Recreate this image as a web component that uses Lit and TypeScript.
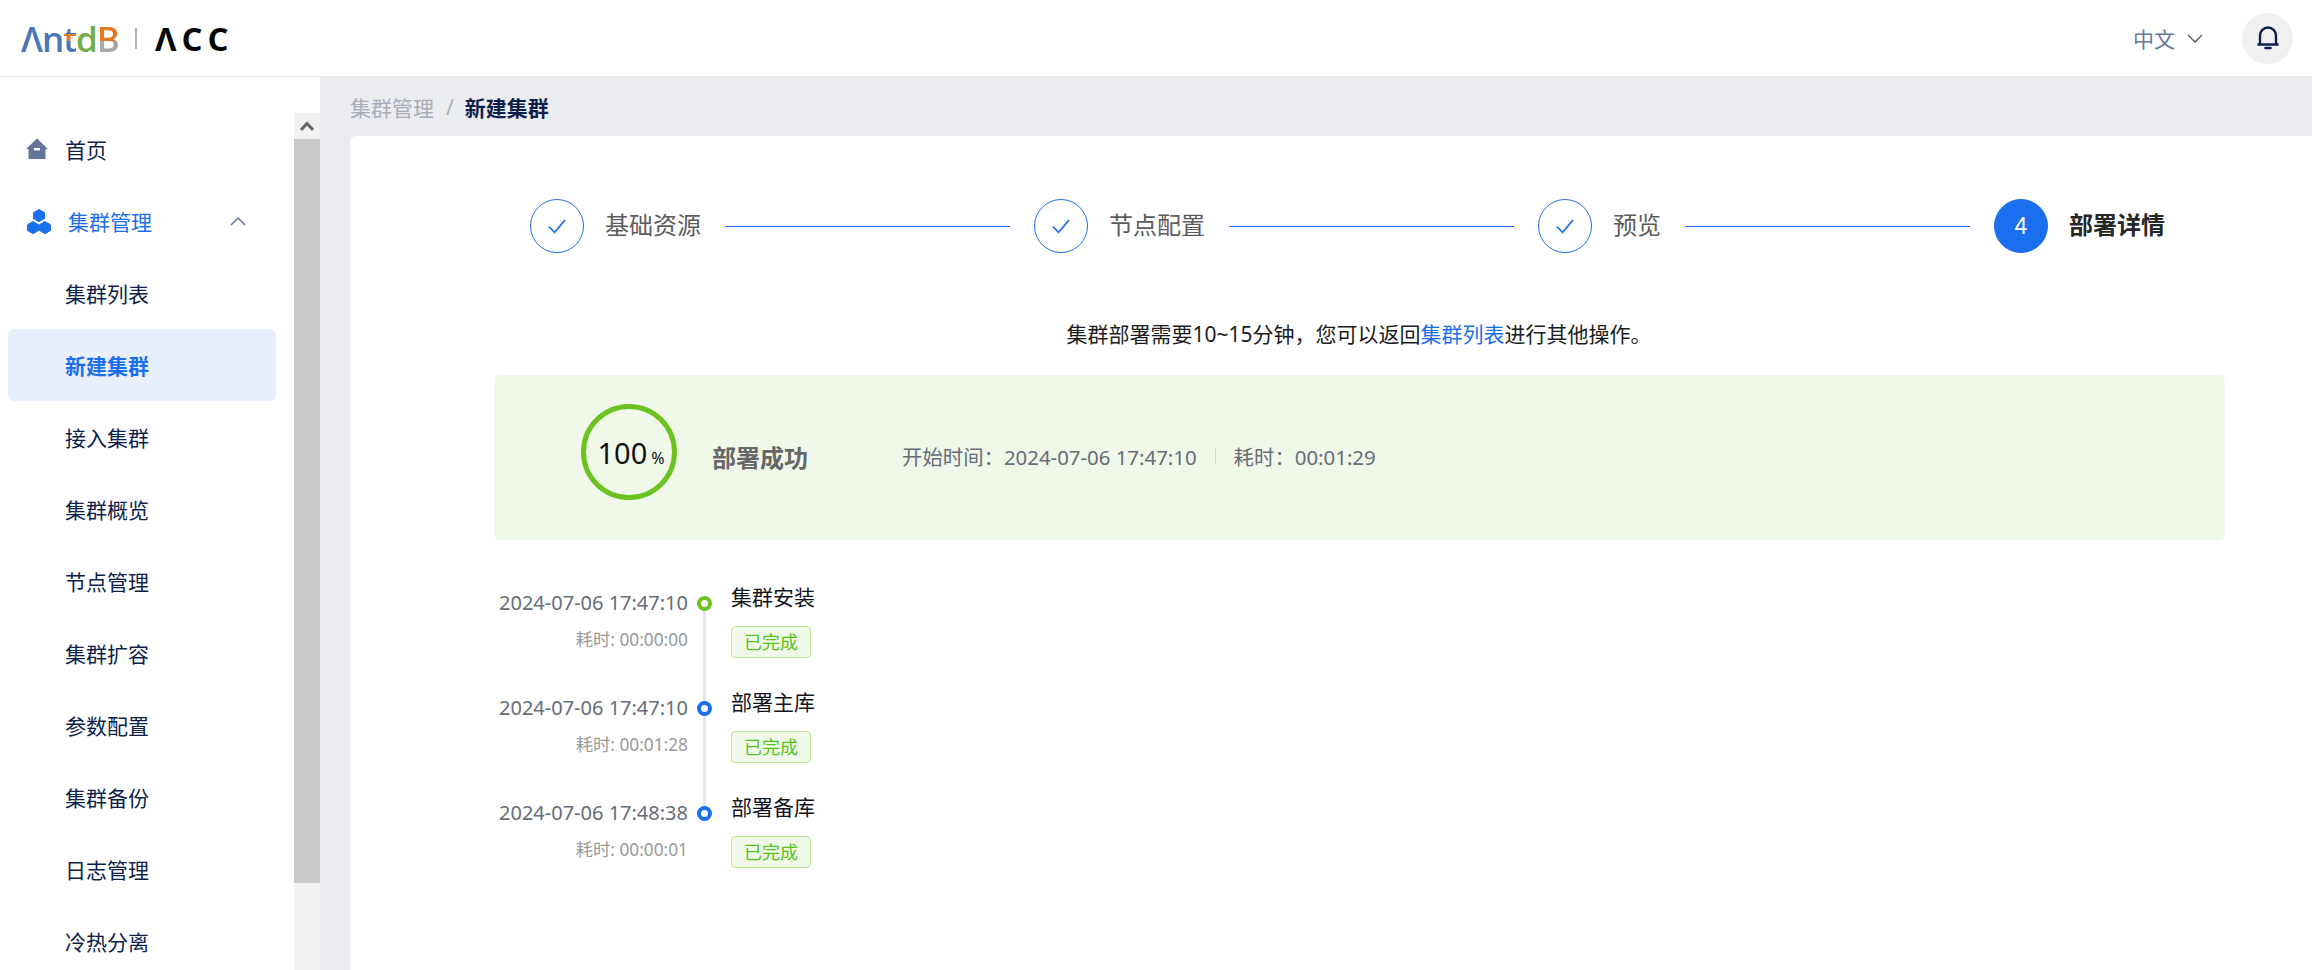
import { LitElement, html, css, svg } from "lit";
import { customElement } from "lit/decorators.js";

const menu = ["集群列表", "新建集群", "接入集群", "集群概览", "节点管理", "集群扩容", "参数配置", "集群备份", "日志管理", "冷热分离"];
const steps = ["基础资源", "节点配置", "预览", "部署详情"];
const logs = [
  { time: "2024-07-06 17:47:10", cost: "00:00:00", title: "集群安装", first: true },
  { time: "2024-07-06 17:47:10", cost: "00:01:28", title: "部署主库", first: false },
  { time: "2024-07-06 17:48:38", cost: "00:00:01", title: "部署备库", first: false },
];

const homeIcon = svg`<svg width="22" height="22" viewBox="0 0 22 22"><path d="M11 .5 22 11H19.500V21H2.500V11H0Z" fill="#64759a"/><rect x="8" y="10" width="6" height="2.400" fill="#fff"/></svg>`;
const clusterIcon = svg`<svg width="26" height="26" viewBox="0 0 26 26" fill="#1a6fee" stroke="#1a6fee" stroke-linejoin="round"><path d="M13 1.500l5.500 3.200v5.800l-5.500 3.200-5.500-3.200V4.700z"/><path d="M7 13.500l5.500 3.200v5.800L7 25.700l-5.500-3.200v-5.800z"/><path d="M19 13.500l5.500 3.200v5.800L19 25.700l-5.500-3.200v-5.800z"/></svg>`;
const bellIcon = svg`<svg width="24" height="26" viewBox="0 0 24 26" fill="none" stroke="#0d1f4c" stroke-width="2.400"><path d="M1.500 19.500h21M4 19.500V10.500a8 8 0 0 1 16 0v9"/><path d="M9.500 23h5" stroke-width="2.600" stroke-linecap="round"/></svg>`;

@customElement("app-root")
export class AppRoot extends LitElement {
  static styles = css`
    :host {
      display: block;
      width: 2312px;
      height: 970px;
      overflow: hidden;
      background: #ebecf0;
      font-family: "Noto Sans", "Noto Sans CJK SC", sans-serif;
      font-size: 21px;
      color: #0d1f4c;
    }
    .header {
      height: 76px;
      border-bottom: 1px solid #e8e8ea;
      background: #fff;
      display: flex;
      align-items: center;
      padding: 0 19px 0 21px;
    }
    .logo {
      display: flex;
      align-items: center;
      height: 62px;
      line-height: 1;
    }
    .antdb {
      font-family: "Open Sans", sans-serif;
      font-size: 35px;
      font-weight: 600;
      display: flex;
      width: 96px;
      letter-spacing: -1px;
    }
    .a1 { color: #4a76b8; }
    .a2 {
      background: linear-gradient(#4a76b8 0 38%, #e07b20 38% 56%, #4a76b8 56%);
      -webkit-background-clip: text;
      background-clip: text;
      color: transparent;
    }
    .a3 { color: #6fae4a; }
    .a4 {
      background: linear-gradient(#e07b20 0 58%, #a8a8a8 58%);
      -webkit-background-clip: text;
      background-clip: text;
      color: transparent;
    }
    .logo-sep {
      width: 2px;
      height: 21px;
      margin: 0 18px;
      background: #a9b3c4;
    }
    .acc {
      font-family: "Open Sans", sans-serif;
      font-size: 33px;
      font-weight: 700;
      color: #050505;
      letter-spacing: 5px;
    }
    .spacer { flex: 1; }
    .lang {
      color: #64789f;
      display: flex;
      align-items: center;
      gap: 12px;
      margin-right: 39px;
    }
    .bell {
      width: 51px;
      height: 51px;
      border-radius: 50%;
      background: #f0f0f2;
      display: flex;
      align-items: center;
      justify-content: center;
    }
    .body {
      display: flex;
      height: 893px;
    }
    .side {
      width: 320px;
      flex: none;
      background: #fff;
      display: flex;
      overflow: hidden;
    }
    .nav {
      flex: 1;
      padding: 36px 0 0 8px;
    }
    .nav-item {
      height: 72px;
      display: flex;
      align-items: center;
      width: 268px;
      box-sizing: border-box;
      padding-left: 57px;
      border-radius: 6px;
      white-space: nowrap;
    }
    .nav-item.top { padding-left: 18px; }
    .nav-item.open { color: #1a6fee; }
    .nav-item.active {
      background: #e8f0fe;
      color: #1a6fee;
      font-weight: 700;
    }
    .top-icon {
      width: 39px;
      flex: none;
      display: flex;
    }
    .nav-item.open .top-icon { width: 42px; }
    .chev { margin-left: 78px; }
    .scroll {
      width: 26px;
      flex: none;
      margin-top: 36px;
      background: #f1f1f1;
      display: flex;
      flex-direction: column;
    }
    .scroll-btn {
      height: 26px;
      display: flex;
      align-items: center;
      justify-content: center;
    }
    .thumb {
      height: 744px;
      background: #c9c9c9;
    }
    .main {
      flex: 1;
      min-width: 0;
      padding: 0 0 0 30px;
    }
    .crumb {
      height: 59px;
      display: flex;
      align-items: center;
      color: #a9adb9;
    }
    .crumb i {
      font-style: normal;
      margin: 0 11px 0 12px;
    }
    .crumb b { color: #0d1f4c; }
    .card {
      background: #fff;
      height: 900px;
      border-radius: 6px 0 0 0;
      padding: 63px 87px 0 143px;
      box-sizing: border-box;
    }
    .steps {
      display: flex;
      align-items: center;
      height: 54px;
      margin: 0 60px 0 37px;
    }
    .step {
      display: flex;
      align-items: center;
      font-size: 24px;
      color: #5c5c5c;
    }
    .step.now {
      color: #262626;
      font-weight: 700;
    }
    .step-label { padding-bottom: 5px; }
    .dot {
      width: 54px;
      height: 54px;
      box-sizing: border-box;
      border-radius: 50%;
      border: 1px solid #1a6fee;
      margin-right: 21px;
      display: flex;
      align-items: center;
      justify-content: center;
      font-family: "Liberation Sans", sans-serif;
      font-size: 23px;
      font-weight: 400;
    }
    .step.now .dot {
      background: #1a6fee;
      color: #fff;
    }
    .step-line {
      flex: 1;
      height: 1px;
      margin: 0 24px;
      background: #1a6fee;
    }
    .tip {
      text-align: center;
      color: #1c1c1c;
      margin: 64px 0 0 -23px;
      height: 34px;
      line-height: 34px;
      padding-left: 23px;
      font-size: 21px;
    }
    .tip a { color: #1a6fee; }
    .banner {
      margin: 24px 0 0 1px;
      height: 165px;
      border-radius: 6px;
      background: #f0f8e9;
      display: flex;
      align-items: center;
      padding-left: 87px;
    }
    .progress {
      position: relative;
      width: 96px;
      height: 96px;
      flex: none;
      margin: 0 35px 12px 0;
    }
    .progress-text {
      position: absolute;
      inset: 0 0 0 4px;
      display: flex;
      align-items: baseline;
      justify-content: center;
      gap: 4px;
      color: #111;
      font-size: 29px;
      line-height: 98px;
    }
    .progress-text small { font-size: 16px; }
    .result {
      color: #666;
      font-size: 24px;
      font-weight: 700;
      margin: -3px 94px 0 0;
    }
    .meta {
      color: #666c78;
      font-size: 20.400px;
      display: flex;
      align-items: center;
      margin-top: -3px;
      white-space: nowrap;
    }
    .meta-sep {
      width: 1px;
      height: 16px;
      background: #d5d8dd;
      margin: 0 18px;
    }
    .timeline {
      margin-top: 36px;
      display: flex;
      flex-direction: column;
    }
    .log {
      display: flex;
      height: 105px;
    }
    .log-left {
      width: 195px;
      flex: none;
      text-align: right;
      padding-top: 13px;
      line-height: 28px;
    }
    .log-time {
      color: #666c78;
      font-size: 20px;
    }
    .log-cost {
      color: #999;
      font-size: 17.300px;
      margin-top: 9px;
    }
    .log-rail {
      width: 43px;
      flex: none;
      position: relative;
    }
    .log-dot {
      position: absolute;
      left: 9px;
      top: 20px;
      width: 15px;
      height: 15px;
      box-sizing: border-box;
      border-radius: 50%;
      border: 4px solid #1a6fee;
      background: #fff;
    }
    .log.first .log-dot { border-color: #6cc21f; }
    .log-bar {
      position: absolute;
      left: 15px;
      top: 35px;
      width: 3px;
      height: 90px;
      background: #e5e5e5;
    }
    .log:last-child .log-bar { display: none; }
    .log-title {
      color: #14141c;
      height: 28px;
      line-height: 28px;
      margin-top: 7px;
    }
    .tag {
      width: 80px;
      height: 32px;
      box-sizing: border-box;
      margin-top: 15px;
      border: 1px solid #b7eb8f;
      border-radius: 4px;
      background: #f0f8e9;
      color: #52c41a;
      font-size: 18px;
      line-height: 30px;
      text-align: center;
    }
  `;

  render() {
    return html`
      <div class="header">
        <div class="logo">
          <span class="antdb"><span class="a1">Λn</span><span class="a2">t</span><span class="a3">d</span><span class="a4">B</span></span>
          <span class="logo-sep"></span>
          <span class="acc">ΛCC</span>
        </div>
        <span class="spacer"></span>
        <div class="lang">
          中文
          <svg width="16" height="9" viewBox="0 0 16 9" fill="none" stroke="#555" stroke-width="1.300"><path d="M1 1l7 7 7-7"/></svg>
        </div>
        <div class="bell">${bellIcon}</div>
      </div>
      <div class="body">
        <div class="side">
          <div class="nav">
            <div class="nav-item top"><span class="top-icon">${homeIcon}</span>首页</div>
            <div class="nav-item top open">
              <span class="top-icon">${clusterIcon}</span>集群管理
              <svg class="chev" width="16" height="9" viewBox="0 0 16 9" fill="none" stroke="#64789f" stroke-width="1.500"><path d="M1 8l7-7 7 7"/></svg>
            </div>
            ${menu.map((m) => html`<div class="nav-item ${m === "新建集群" ? "active" : ""}">${m}</div>`)}
          </div>
          <div class="scroll">
            <div class="scroll-btn">
              <svg width="14" height="10" viewBox="0 0 14 10" fill="none" stroke="#666" stroke-width="3"><path d="M1 9l6-6.500 6 6.500"/></svg>
            </div>
            <div class="thumb"></div>
          </div>
        </div>
        <div class="main">
          <div class="crumb">集群管理<i>/</i><b>新建集群</b></div>
          <div class="card">
            <div class="steps">
              ${steps.map((s, i) => html`
                <div class="step ${i === 3 ? "now" : ""}">
                  <span class="dot">${i === 3 ? "4" : html`<svg width="18" height="15" viewBox="0 0 18 15" fill="none" stroke="#1a6fee" stroke-width="1.800"><path d="M1 7.500l5.500 6L17 1"/></svg>`}</span><span class="step-label">${s}</span>
                </div>
                ${i < 3 ? html`<span class="step-line"></span>` : ""}
              `)}
            </div>
            <div class="tip">集群部署需要10~15分钟，您可以返回<a>集群列表</a>进行其他操作。</div>
            <div class="banner">
              <div class="progress">
                <svg width="96" height="96" viewBox="0 0 96 96"><circle cx="48" cy="48" r="45.500" fill="none" stroke="#6cc21f" stroke-width="5"/></svg>
                <div class="progress-text">100<small>%</small></div>
              </div>
              <div class="result">部署成功</div>
              <div class="meta">开始时间：2024-07-06 17:47:10<span class="meta-sep"></span>耗时：00:01:29</div>
            </div>
            <div class="timeline">
              ${logs.map((l) => html`
                <div class="log ${l.first ? "first" : ""}">
                  <div class="log-left">
                    <div class="log-time">${l.time}</div>
                    <div class="log-cost">耗时: ${l.cost}</div>
                  </div>
                  <div class="log-rail"><span class="log-dot"></span><span class="log-bar"></span></div>
                  <div>
                    <div class="log-title">${l.title}</div>
                    <div class="tag">已完成</div>
                  </div>
                </div>
              `)}
            </div>
          </div>
        </div>
      </div>
    `;
  }
}
